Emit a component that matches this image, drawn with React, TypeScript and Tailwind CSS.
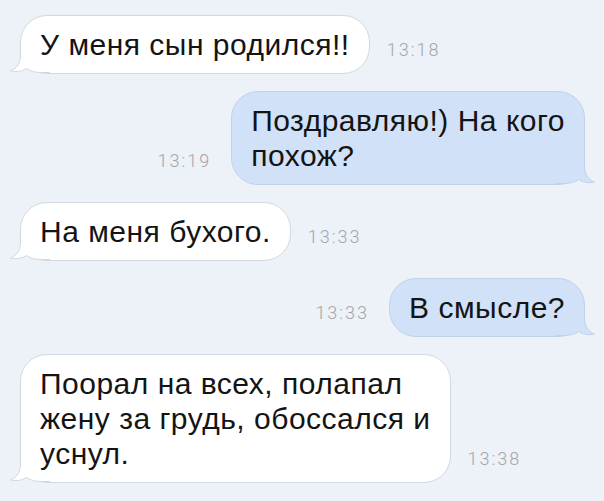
import React from "react";

type Side = "in" | "out";

interface Msg {
  side: Side;
  lines: string[];
  time: string;
}

const messages: Msg[] = [
  { side: "in", lines: ["У меня сын родился!!"], time: "13:18" },
  { side: "out", lines: ["Поздравляю!) На кого", "похож?"], time: "13:19" },
  { side: "in", lines: ["На меня бухого."], time: "13:33" },
  { side: "out", lines: ["В смысле?"], time: "13:33" },
  {
    side: "in",
    lines: ["Поорал на всех, полапал", "жену за грудь, обоссался и", "уснул."],
    time: "13:38",
  },
];

function Tail({ side }: { side: Side }) {
  const fill = side === "in" ? "#ffffff" : "#d1e1f7";
  const stroke = side === "in" ? "#d3d8e0" : "#c3d2e8";
  const d = "M10.5 0 L10.5 12 C10.5 20 7 25.5 0.5 28 C7 29.5 12.5 28 16.5 25.5 C20.5 28.5 26 29.5 32 29.5 L40 29.5";
  return (
    <svg
      width="40"
      height="31"
      viewBox="0 0 40 31"
      className={
        side === "in"
          ? "absolute -left-[11px] -bottom-[1px]"
          : "absolute -right-[11px] -bottom-[1px] -scale-x-100"
      }
    >
      <path d={d + " L40 0 Z"} fill={fill} />
      <path d={d} fill="none" stroke={stroke} strokeWidth="1" />
    </svg>
  );
}

function Time({ value }: { value: string }) {
  return (
    <span
      className="mb-[14px] text-[18px] leading-[20px] font-light tracking-[2px] text-[#a1a6ae] whitespace-nowrap"
      style={{ fontFamily: "Roboto, 'Liberation Sans', sans-serif" }}
    >
      {value}
    </span>
  );
}

function Row({ msg }: { msg: Msg }) {
  const isIn = msg.side === "in";
  return (
    <div className={isIn ? "flex items-end gap-[17px]" : "flex items-end justify-end gap-[20px]"}>
      {!isIn && <Time value={msg.time} />}
      <div
        className={
          isIn
            ? "relative rounded-[27px] border border-[#d3d8e0] bg-white px-[19px] py-[11px]"
            : "relative rounded-[27px] border border-[#c3d2e8] bg-[#d1e1f7] px-[19px] py-[11px]"
        }
      >
        <Tail side={msg.side} />
        <div className="relative text-[30px] leading-[35px] tracking-[0.5px] text-[#141414] whitespace-nowrap">
          {msg.lines.map((l, i) => (
            <div key={i}>{l}</div>
          ))}
        </div>
      </div>
      {isIn && <Time value={msg.time} />}
    </div>
  );
}

export default function App() {
  return (
    <div
      className="w-[604px] h-[501px] overflow-hidden bg-[#edf1f8] pt-[15px] pl-[20px] pr-[19px] flex flex-col gap-[17px]"
      style={{ fontFamily: "'Liberation Sans', Arial, sans-serif" }}
    >
      {messages.map((m, i) => (
        <Row key={i} msg={m} />
      ))}
    </div>
  );
}
